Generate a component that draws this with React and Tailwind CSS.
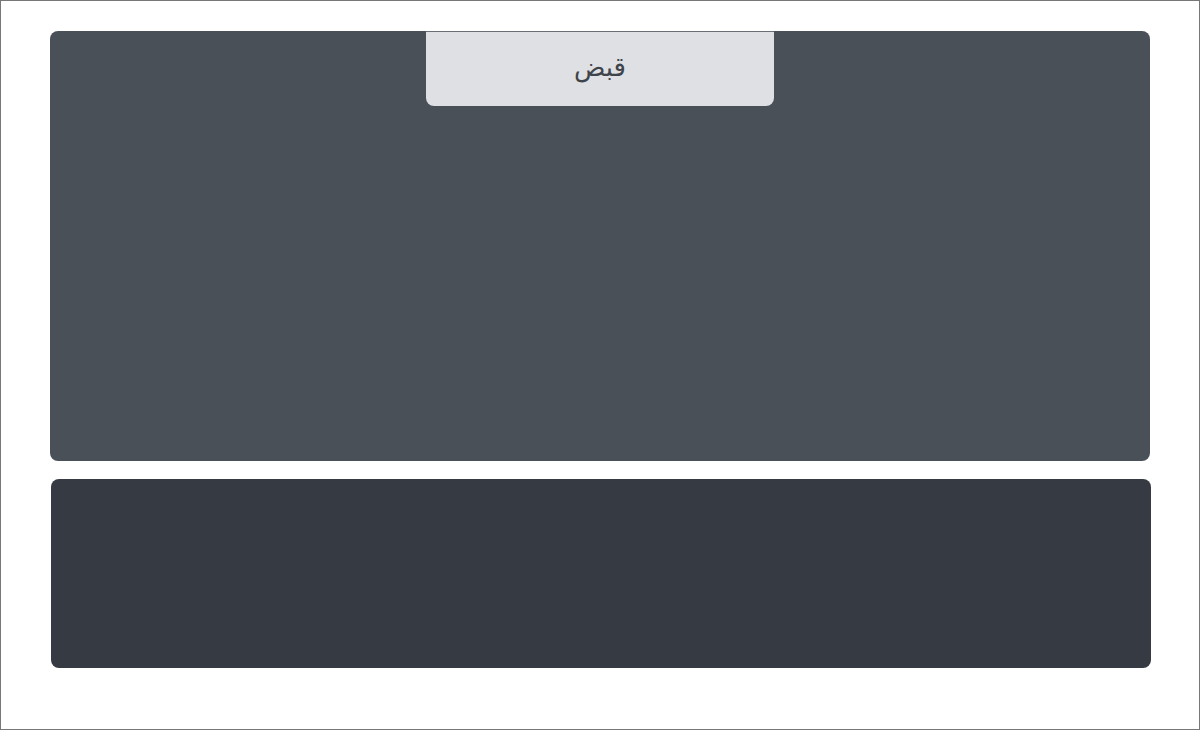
export default function App() {
  return (
    <main
      className="w-[1200px] h-[730px] bg-white border border-[#777777] pt-[30px] pl-[49px]"
      style={{ fontFamily: '"Noto Sans", "DejaVu Sans", sans-serif' }}
    >
      <section className="w-[1100px] h-[430px] bg-[#4a5058] rounded-lg flex justify-center">
        <div className="w-[348px] h-[75px] bg-[#dee0e4] rounded-b-lg flex items-center justify-center border-t border-[#6b6f75]">
          <span dir="rtl" className="text-[26px] leading-none text-[#3f444b] -mt-[7px]">
            قبض
          </span>
        </div>
      </section>

      <section className="w-[1100px] h-[189px] mt-[18px] ml-px bg-[#363a42] rounded-lg" />
    </main>
  );
}
